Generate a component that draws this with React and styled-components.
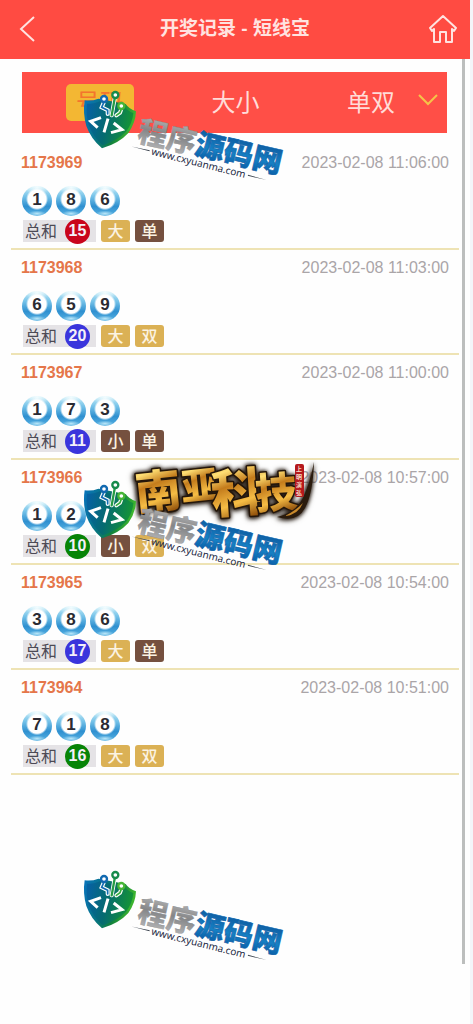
import React, { useState } from 'react';
import styled, { createGlobalStyle } from 'styled-components';

const latin = '"Liberation Sans", "Noto Sans CJK SC", sans-serif';
const cjk = '"Noto Sans CJK SC", sans-serif';

const GlobalStyle = createGlobalStyle`
  *, *::before, *::after { box-sizing: border-box; }
  body { margin: 0; background: #fefefe; font-family: ${latin}; }
`;

const Page = styled.div`
  position: relative;
  min-height: 100vh;
  border-right: 3px solid #f3f5f9;
`;

const Header = styled.header`
  display: flex;
  align-items: center;
  justify-content: space-between;
  height: 59px;
  padding: 0 12px 2px 16px;
  background: #ff4b42;
  color: #ffe3e0;
`;

const Title = styled.h1`
  margin: 0;
  padding-left: 4px;
  font-size: 19px;
  line-height: 28px;
  font-weight: 700;
`;

const IconButton = styled.button`
  display: flex;
  padding: 0;
  border: 0;
  background: none;
  color: inherit;
  cursor: pointer;
`;

const Body = styled.div`
  display: flex;
  gap: 3px;
  padding-right: 5px;
`;

const Main = styled.main`
  flex: 1;
  padding: 13px 0 0 11px;
`;

const ScrollThumb = styled.div`
  width: 3px;
  height: calc(100vh - 119px);
  background: #bcbebd;
`;

const Tabs = styled.nav`
  display: flex;
  align-items: center;
  justify-content: space-between;
  height: 61px;
  margin: 0 12px 12px 11px;
  padding: 0 8px 0 44px;
  background: #ff4f47;
`;

const TabEnd = styled.div`
  display: flex;
  align-items: center;
  gap: 12px;
`;

const Tab = styled.button`
  padding: 0 10px 3px;
  border: 0;
  border-radius: 5px;
  font: 24px/34px ${cjk};
  color: ${(p) => (p.$active ? '#f4742d' : '#ffdcd8')};
  background: ${(p) => (p.$active ? '#f3b733' : 'transparent')};
  cursor: pointer;
`;

const ExpandButton = styled(IconButton)`
  padding-bottom: 6px;
`;

const Records = styled.ul`
  margin: 0;
  padding: 0;
  list-style: none;
`;

const Record = styled.li`
  padding: 9px 10px 6px 10px;
  border-bottom: 2px solid #eee3b4;
`;

const RecordHead = styled.div`
  display: flex;
  justify-content: space-between;
  margin-bottom: 14px;
  font-size: 16px;
  line-height: 18px;
`;

const Issue = styled.strong`
  color: #e5764a;
`;

const Time = styled.time`
  color: #aaa5a8;
`;

const Balls = styled.div`
  display: flex;
  gap: 4px;
  margin: 0 0 4px 1px;
`;

const Ball = styled.span`
  width: 30px;
  height: 30px;
  border-radius: 50%;
  text-align: center;
  font-size: 17px;
  line-height: 28px;
  font-weight: 700;
  color: #2b2b33;
  background:
    radial-gradient(circle at 50% 44%, #fff 0 9px, transparent 11px),
    radial-gradient(ellipse 9px 3px at 50% 92%, #b9e6f8 0, transparent 100%),
    radial-gradient(ellipse 12px 8px at 50% 4%, #f2fcfe 0, transparent 100%),
    linear-gradient(#cdeff9 0, #76c3e9 34%, #2f90d0 68%, #57b1e2 100%);
`;

const Summary = styled.div`
  display: flex;
  gap: 5px;
  margin-left: 2px;
  font-family: ${cjk};
  font-size: 16px;
  line-height: 20px;
`;

const Total = styled.span`
  display: flex;
  gap: 8px;
  width: 73px;
  height: 22px;
  padding-left: 2px;
  background: #e5e3e6;
  color: #4c4a55;
`;

const tones = { red: '#c9051c', blue: '#3a35dc', green: '#078407' };

const Sum = styled.b`
  flex: none;
  width: 25px;
  height: 25px;
  margin-top: -1px;
  border-radius: 50%;
  text-align: center;
  font: 700 16px/24px ${latin};
  color: #f4f0f8;
  background: ${(p) => tones[p.$tone]};
`;

const Tag = styled.span`
  width: 29px;
  height: 22px;
  border-radius: 3px;
  text-align: center;
  font-weight: 500;
  color: #fbf3e2;
  background: ${(p) => (p.$dark ? '#75503f' : '#dbb155')};
`;

const Watermark = styled.svg`
  position: absolute;
  left: 75px;
  top: ${(p) => p.$top}px;
  width: 215px;
  height: 105px;
  overflow: visible;
  pointer-events: none;
`;

const BrandMark = styled.svg`
  position: absolute;
  left: 125px;
  top: 455px;
  width: 205px;
  height: 75px;
  overflow: visible;
  pointer-events: none;
`;

const BrandText = styled.g`
  filter: drop-shadow(0 0 2px #2a2018) drop-shadow(-1px 1px 2px #2a2018);
`;

const records = [
  { issue: '1173969', time: '2023-02-08 11:06:00', balls: [1, 8, 6], tone: 'red', tags: ['大', '单'] },
  { issue: '1173968', time: '2023-02-08 11:03:00', balls: [6, 5, 9], tone: 'blue', tags: ['大', '双'] },
  { issue: '1173967', time: '2023-02-08 11:00:00', balls: [1, 7, 3], tone: 'blue', tags: ['小', '单'] },
  { issue: '1173966', time: '2023-02-08 10:57:00', balls: [1, 2, 7], tone: 'green', tags: ['小', '双'] },
  { issue: '1173965', time: '2023-02-08 10:54:00', balls: [3, 8, 6], tone: 'blue', tags: ['大', '单'] },
  { issue: '1173964', time: '2023-02-08 10:51:00', balls: [7, 1, 8], tone: 'green', tags: ['大', '双'] },
];

function SiteWatermark({ id, top }) {
  return (
    <Watermark $top={top} viewBox="0 0 645 315" role="img" aria-label="程序源码网">
      <defs>
        <linearGradient id={`${id}-shield`} x1="0" y1="0" x2="1" y2="0.25">
          <stop offset="0" stopColor="#0873bd" />
          <stop offset="0.45" stopColor="#08757c" />
          <stop offset="0.7" stopColor="#11813d" />
          <stop offset="1" stopColor="#3db52f" />
        </linearGradient>
        <linearGradient id={`${id}-inner`} x1="0" y1="0" x2="1" y2="0.2">
          <stop offset="0" stopColor="#0760a8" />
          <stop offset="0.5" stopColor="#056b70" />
          <stop offset="1" stopColor="#149238" />
        </linearGradient>
        <linearGradient id={`${id}-silver`} x1="0" y1="0" x2="0" y2="1">
          <stop offset="0" stopColor="#c4c4c4" />
          <stop offset="0.5" stopColor="#858688" />
          <stop offset="1" stopColor="#bcbcbd" />
        </linearGradient>
        <linearGradient id={`${id}-blue`} x1="0" y1="0" x2="0" y2="1">
          <stop offset="0" stopColor="#0b4c91" />
          <stop offset="0.6" stopColor="#1680c4" />
          <stop offset="1" stopColor="#07549e" />
        </linearGradient>
      </defs>
      <path d="M29 61Q51 64 70 56L152 72Q163 88 183 94Q182 128 160 159Q132 190 81 205Q48 177 34 138Q23 100 29 61Z" fill={`url(#${id}-shield)`} />
      <path d="M36 71Q57 73 75 64L149 80Q158 93 175 99Q172 131 153 155Q128 180 83 196Q53 169 41 134Q32 104 36 71Z" fill={`url(#${id}-inner)`} />
      <g fill="none" stroke="#fff" strokeWidth="12" strokeLinecap="round">
        <path d="M86 68L80 82L98 91V102M119 56L110 106M138 90L135 98L124 106" />
      </g>
      <g fill="none" strokeWidth="5" strokeLinecap="round">
        <path d="M86 68L80 82L98 91V102" stroke="#126eb4" />
        <path d="M119 56L110 106" stroke="#249b45" strokeWidth="7" />
        <path d="M138 90L135 98L124 106" stroke="#36ad3d" />
      </g>
      <g fill="#fff" strokeWidth="7">
        <circle cx="87" cy="57" r="9" stroke="#1269b0" />
        <circle cx="121" cy="45" r="9" stroke="#168b4b" />
        <circle cx="139" cy="78" r="9" stroke="#48b637" />
      </g>
      <path d="M78 113L47 124L68 143M99 116L87 157M116 129L141 149L108 158" fill="none" stroke="#fff" strokeWidth="9" />
      <g transform="rotate(13 184 182)" fontFamily={cjk} fontWeight="900" fontSize="88">
        <text x="184" y="182" fill={`url(#${id}-silver)`} stroke="#8b8c8e" strokeWidth="1">程序</text>
        <text x="360" y="182" fill={`url(#${id}-blue)`} stroke="#0f63aa" strokeWidth="2">源码网</text>
      </g>
      <g transform="rotate(14 228 220)">
        <text x="228" y="224" fontFamily='"Noto Sans", sans-serif' fontSize="30" fill="#1e2b45">www.cxyuanma.com</text>
        <path d="M166 214L222 212V215ZM526 212L584 214L526 215Z" fill="#39414c" />
      </g>
    </Watermark>
  );
}

function StudioMark() {
  return (
    <BrandMark viewBox="0 0 205 75" role="img" aria-label="南亚科技">
      <defs>
        <linearGradient id="gold" x1="0" y1="0" x2="0.2" y2="1">
          <stop offset="0" stopColor="#b87316" />
          <stop offset="0.3" stopColor="#ffdf74" />
          <stop offset="0.5" stopColor="#c47c1c" />
          <stop offset="0.75" stopColor="#f6bd45" />
          <stop offset="1" stopColor="#8b4a08" />
        </linearGradient>
      </defs>
      <BrandText>
        <g fontFamily={cjk} fontWeight="900" fill="url(#gold)" stroke="#24160a" strokeWidth="3" strokeLinejoin="round" paintOrder="stroke">
          <text x="10" y="53" fontSize="46" transform="rotate(-6 33 36)">南</text>
          <text x="56" y="44" fontSize="37" transform="rotate(-6 74 30)">亚</text>
          <text x="86" y="57" fontSize="52" transform="rotate(-4 110 36)">科</text>
          <text x="130" y="53" fontSize="42" transform="rotate(-4 150 36)">技</text>
        </g>
        <path d="M189 7Q188 38 180 53Q172 68 152 62Q170 58 178 43Q185 28 189 7Z" fill="#2a1b0d" />
        <path d="M178 48Q173 60 160 61Q170 56 178 48Z" fill="#c98a2c" />
      </BrandText>
      <rect x="170" y="9" width="9" height="33" rx="2" fill="#b5191d" />
      <g fontFamily={cjk} fontSize="6" fontWeight="700" fill="#f6d9c8" textAnchor="middle">
        <text x="174" y="16">上</text>
        <text x="174" y="24">明</text>
        <text x="174" y="32">演</text>
        <text x="174" y="40">弘</text>
      </g>
    </BrandMark>
  );
}

export default function App() {
  const [active, setActive] = useState('号码');
  const tab = (name) => (
    <Tab type="button" $active={active === name} onClick={() => setActive(name)}>{name}</Tab>
  );

  return (
    <>
      <GlobalStyle />
      <Page>
        <Header>
          <IconButton type="button" aria-label="返回">
            <svg width="22" height="28" viewBox="0 0 22 28" fill="none" stroke="currentColor" strokeWidth="2">
              <path d="M18 2L5 14L18 26" />
            </svg>
          </IconButton>
          <Title>开奖记录 - 短线宝</Title>
          <IconButton type="button" aria-label="首页">
            <svg width="30" height="30" viewBox="0 0 30 30" fill="none" stroke="currentColor" strokeWidth="2" strokeLinejoin="round">
              <path d="M2 14L15 2L28 14L26 17L24 15V28H18V18H12V28H6V15L4 17Z" />
            </svg>
          </IconButton>
        </Header>
        <Body>
          <Main>
            <Tabs aria-label="显示方式">
              {tab('号码')}
              {tab('大小')}
              <TabEnd>
                {tab('单双')}
                <ExpandButton type="button" aria-label="展开">
                  <svg width="22" height="22" viewBox="0 0 22 22" fill="none" stroke="#f5c449" strokeWidth="2">
                    <path d="M2 6L11 15L20 6" />
                  </svg>
                </ExpandButton>
              </TabEnd>
            </Tabs>
            <Records>
              {records.map((r) => (
                <Record key={r.issue}>
                  <RecordHead>
                    <Issue>{r.issue}</Issue>
                    <Time>{r.time}</Time>
                  </RecordHead>
                  <Balls>
                    {r.balls.map((n, i) => <Ball key={i}>{n}</Ball>)}
                  </Balls>
                  <Summary>
                    <Total>总和<Sum $tone={r.tone}>{r.balls[0] + r.balls[1] + r.balls[2]}</Sum></Total>
                    {r.tags.map((t) => (
                      <Tag key={t} $dark={t === '小' || t === '单'}>{t}</Tag>
                    ))}
                  </Summary>
                </Record>
              ))}
            </Records>
          </Main>
          <ScrollThumb />
        </Body>
        <StudioMark />
        <SiteWatermark id="wm1" top={80} />
        <SiteWatermark id="wm2" top={470} />
        <SiteWatermark id="wm3" top={860} />
      </Page>
    </>
  );
}
